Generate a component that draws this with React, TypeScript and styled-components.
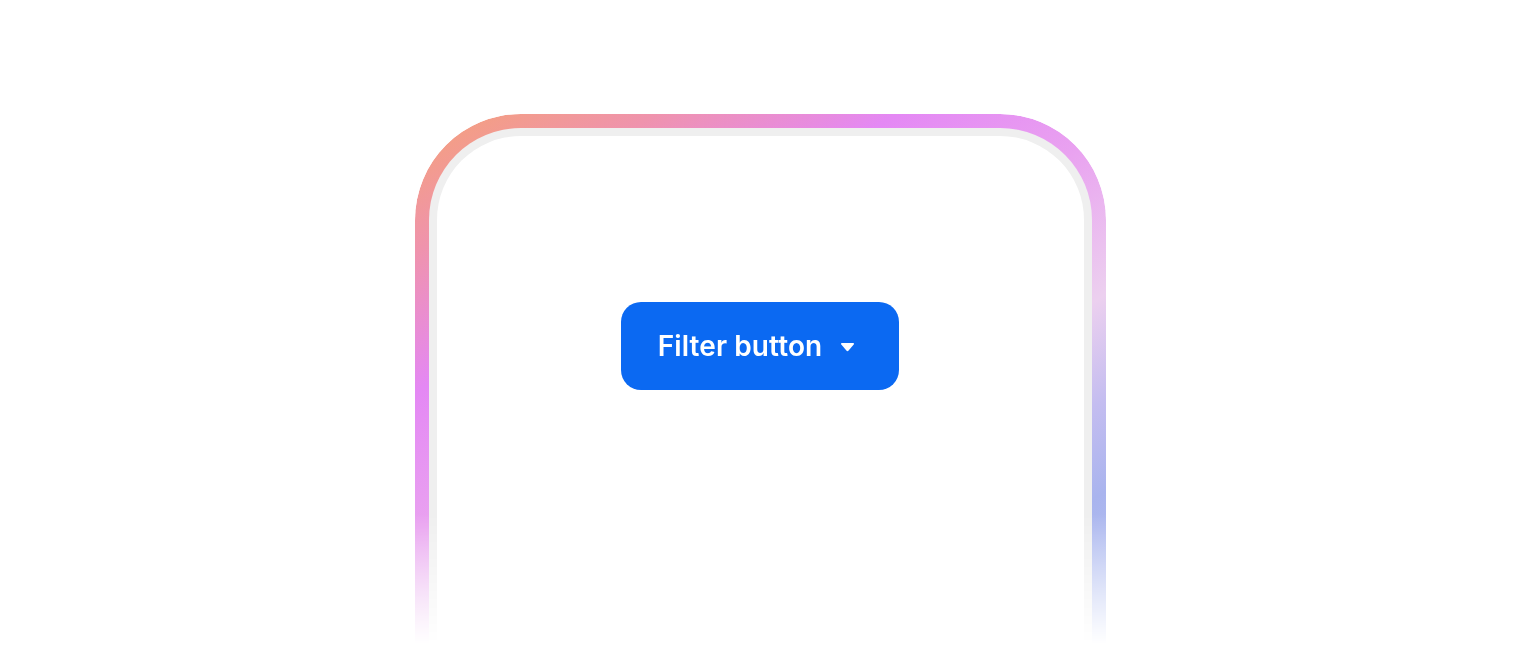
import React from "react";
import styled, { createGlobalStyle } from "styled-components";

const GlobalStyle = createGlobalStyle`
  html, body {
    margin: 0;
    padding: 0;
    background: #ffffff;
    font-family: Inter, "Noto Sans", sans-serif;
  }
`;

const Page = styled.div`
  height: 650px;
  overflow: hidden;
  display: flex;
  justify-content: center;
  padding-top: 114px;
  box-sizing: border-box;
`;

/* gradient rim, fading out towards the bottom */
const Rim = styled.div`
  width: 691px;
  height: 760px;
  flex-shrink: 0;
  box-sizing: border-box;
  padding: 14px;
  border-radius: 106px;
  background: linear-gradient(
    150deg,
    #f5a276 0%,
    #ef93ad 12%,
    #e488f4 24%,
    #e9a2f0 36%,
    #ecd0ef 50%,
    #c4bdf0 59%,
    #a9b4ee 67%,
    #b9c6f2 80%
  );
  -webkit-mask-image: linear-gradient(to bottom, #000 0, #000 400px, transparent 530px);
  mask-image: linear-gradient(to bottom, #000 0, #000 400px, transparent 530px);
`;

const Bezel = styled.div`
  height: 100%;
  box-sizing: border-box;
  padding: 8px;
  border-radius: 92px;
  background: #efefef;
`;

const Screen = styled.div`
  height: 100%;
  box-sizing: border-box;
  border-radius: 84px;
  background: #ffffff;
  display: flex;
  flex-direction: column;
  align-items: center;
  padding-top: 166px;
`;

const FilterButton = styled.button`
  height: 88px;
  box-sizing: border-box;
  padding: 0 44px 0 37px;
  display: flex;
  align-items: center;
  gap: 18px;
  border: none;
  border-radius: 20px;
  background: #0b69f2;
  color: #ffffff;
  font-family: Inter, "Noto Sans", sans-serif;
  font-size: 28px;
  font-weight: 600;
  letter-spacing: 0.1px;
  cursor: pointer;
`;

const Caret = styled.svg`
  width: 15px;
  height: 10px;
  margin-top: 1px;
`;

export default function App() {
  return (
    <>
      <GlobalStyle />
      <Page>
        <Rim>
          <Bezel>
            <Screen>
              <FilterButton>
                Filter button
                <Caret viewBox="0 0 15 10">
                  <path
                    d="M2 1 H13 Q14.6 1 13.7 2.4 L8.6 8.6 Q7.5 9.8 6.4 8.6 L1.3 2.4 Q0.4 1 2 1 Z"
                    fill="#ffffff"
                  />
                </Caret>
              </FilterButton>
            </Screen>
          </Bezel>
        </Rim>
      </Page>
    </>
  );
}
